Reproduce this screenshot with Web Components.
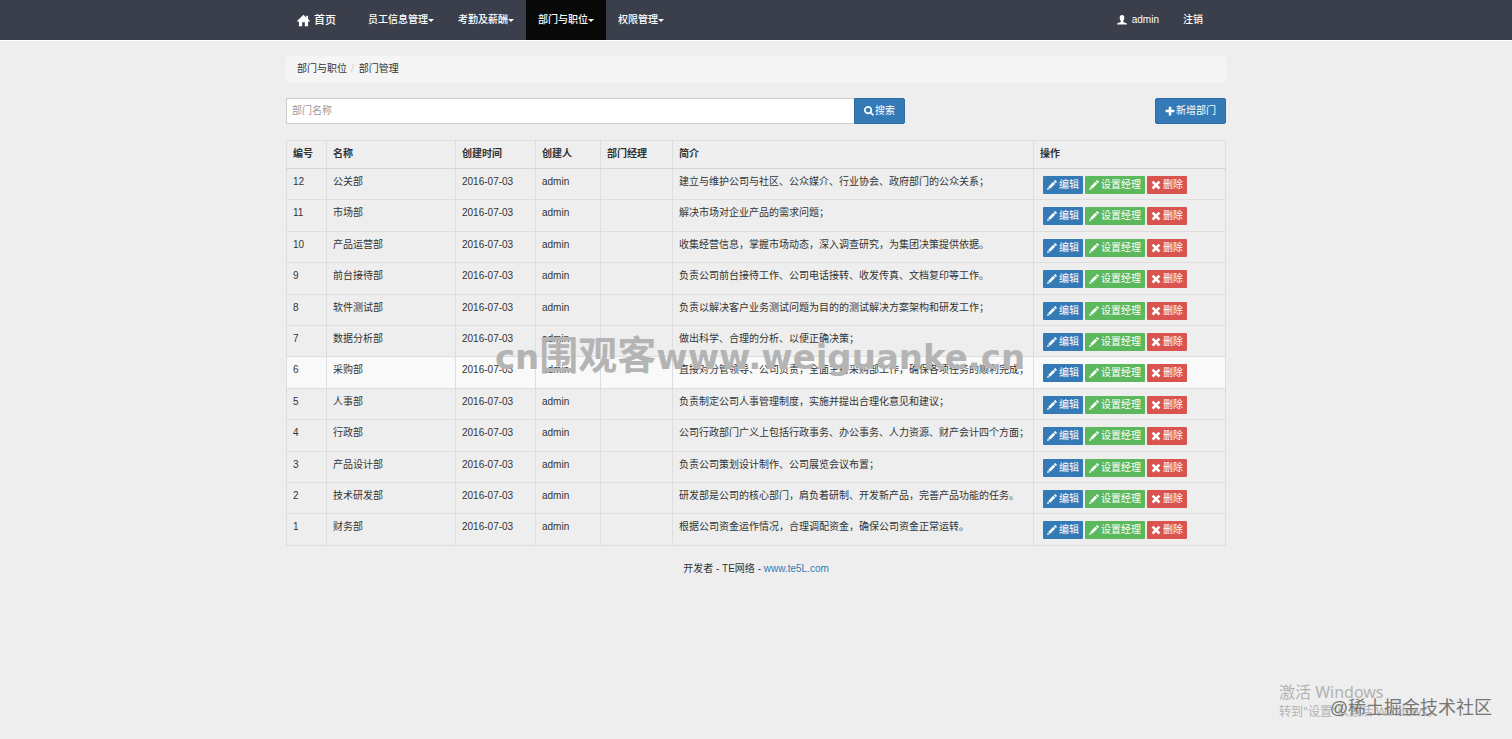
<!DOCTYPE html>
<html lang="zh-CN">
<head>
<meta charset="utf-8">
<title>部门管理</title>
<style>
  body {
    margin: 0;
    min-height: 100vh;
    position: relative;
    background: #eee;
    color: #333;
    font: 10px/14px "Liberation Sans", "Noto Sans CJK SC", sans-serif;
  }
  main {
    max-width: 940px;
    margin: 16px auto 0;
    display: flex;
    flex-direction: column;
    gap: 16px;
  }
</style>
</head>
<body>
<te-navbar>
  <te-nav-item slot="brand" icon="home" brand>首页</te-nav-item>
  <te-nav-item menu>员工信息管理</te-nav-item>
  <te-nav-item menu>考勤及薪酬</te-nav-item>
  <te-nav-item menu active>部门与职位</te-nav-item>
  <te-nav-item menu>权限管理</te-nav-item>
  <te-nav-item slot="user" icon="user">admin</te-nav-item>
  <te-nav-item slot="user">注销</te-nav-item>
</te-navbar>
<main>
  <te-breadcrumb parent="部门与职位">部门管理</te-breadcrumb>
  <te-toolbar></te-toolbar>
  <te-dept-table></te-dept-table>
  <te-footer>开发者 - TE网络 - </te-footer>
</main>
<te-activation></te-activation>

<script>
const ICONS = {
  home: '<path d="M8 1 0 8.600l1.200 1.200L2.400 8.700V15h4v-5h3.200v5h4V8.700l1.200 1.100L16 8.600l-2.400-2.300V2h-2.200v2.200z"/>',
  user: '<path d="M8 0C5.500 0 4.300 1.700 4.300 4.200c0 2 .7 3.700 1.700 4.700v1.600c0 .6-.4.9-1 1.200C2.500 12.700 0 13 0 15h16c0-2-2.500-2.300-5-3.300-.6-.3-1-.6-1-1.200V8.900c1-1 1.700-2.700 1.700-4.700C11.700 1.700 10.500 0 8 0z"/>',
  search: '<path fill-rule="evenodd" d="M6.500 0a6.500 6.500 0 1 0 3.600 11.900l3.300 3.400c.5.500 1.100.5 1.600 0l.4-.4c.5-.5.5-1.100 0-1.600l-3.400-3.300A6.500 6.500 0 0 0 6.500 0zm0 2.600a3.900 3.900 0 1 1 0 7.800 3.900 3.900 0 0 1 0-7.800z"/>',
  plus: '<path d="M6 1h4v5h5v4h-5v5H6v-5H1V6h5z"/>',
  pencil: '<path d="M12.400.5c.4-.4.900-.4 1.300 0l1.800 1.800c.4.4.4.9 0 1.300L14 5.100 10.900 2zM10 2.900 13.100 6 5 14.100 1.900 11zM1.300 11.800l2.900 2.900L0 16z"/>',
  remove: '<path d="M4 1 8 5l4-4 3 3-4 4 4 4-3 3-4-4-4 4-3-3 4-4-4-4z"/>'
};

function mount(host, html) {
  const tpl = document.createElement('template');
  tpl.innerHTML = html;
  host.attachShadow({ mode: 'open' }).append(tpl.content.cloneNode(true));
}

class TeIcon extends HTMLElement {
  constructor() {
    super();
    mount(this, `
      <style>
        :host { display: inline-block; flex: none; width: 10px; height: 10px; }
        svg { display: block; width: 100%; height: 100%; fill: currentColor; }
      </style>
      <svg viewBox="0 0 16 16" aria-hidden="true">${ICONS[this.getAttribute('name')] || ''}</svg>`);
  }
}

class TeNavItem extends HTMLElement {
  constructor() {
    super();
    const icon = this.getAttribute('icon');
    mount(this, `
      <style>
        :host { display: block; }
        a {
          display: flex; align-items: center;
          box-sizing: border-box; height: 40px; padding: 0 12px;
          color: #fff; text-decoration: none; font-weight: 500;
        }
        te-icon { margin-right: 5px; }
        :host([active]) a { background: #080808; }
        :host([brand]) a { font-size: 11px; padding-right: 20px; }
        :host([brand]) te-icon { width: 13px; height: 13px; margin-right: 4px; }
        .caret { border: 3px solid transparent; border-top-color: currentColor; border-bottom: 0; }
      </style>
      <a href="#">${icon ? `<te-icon name="${icon}"></te-icon>` : ''}<slot></slot>${this.hasAttribute('menu') ? '<span class="caret"></span>' : ''}</a>`);
  }
}

class TeNavbar extends HTMLElement {
  constructor() {
    super();
    mount(this, `
      <style>
        :host { display: block; background: #3a3f4b; box-shadow: 0 1px #fff; }
        nav { display: flex; max-width: 942px; margin: 0 auto; }
        .user { display: flex; margin-left: auto; padding-right: 12px; }
      </style>
      <nav><slot name="brand"></slot><slot></slot><div class="user"><slot name="user"></slot></div></nav>`);
  }
}

class TeBreadcrumb extends HTMLElement {
  constructor() {
    super();
    mount(this, `
      <style>
        :host { display: block; background: #f5f5f5; border-radius: 3px; padding: 6px 11px; }
        ol { display: flex; gap: 4px; margin: 0; padding: 0; list-style: none; }
        .sep { color: #ccc; padding-right: 1px; }
      </style>
      <ol><li>${this.getAttribute('parent')}</li><li class="sep" aria-hidden="true">/</li><li><slot></slot></li></ol>`);
  }
}

class TeToolbar extends HTMLElement {
  constructor() {
    super();
    mount(this, `
      <style>
        :host { display: flex; justify-content: space-between; }
        form { display: flex; flex: 0 1 619px; }
        input {
          flex: 1; min-width: 0; box-sizing: border-box; height: 26px; padding: 0 5px 1px;
          font: inherit; color: #555; background: #fff;
          border: 1px solid #ccc; border-right: 0; border-radius: 2px 0 0 2px;
        }
        input::placeholder { color: #999; }
        button {
          display: flex; align-items: center; gap: 1px;
          height: 26px; padding: 0 9px;
          font: inherit; color: #fff; background: #337ab7;
          border: 1px solid #2e6da4; border-radius: 2px;
        }
        form button { border-radius: 0 2px 2px 0; }
      </style>
      <form>
        <input type="text" aria-label="部门名称" placeholder="部门名称">
        <button type="button"><te-icon name="search"></te-icon>搜索</button>
      </form>
      <button type="button"><te-icon name="plus"></te-icon>新增部门</button>`);
  }
}

class TeAction extends HTMLElement {
  constructor() {
    super();
    mount(this, `
      <style>
        :host { display: block; }
        button {
          display: flex; align-items: center; gap: 2px;
          box-sizing: border-box; height: 18px; padding: 0 4px;
          font: inherit; color: #fff; background: #337ab7; border: 0; border-radius: 1px;
        }
        :host([kind="success"]) button { background: #5cb85c; }
        :host([kind="danger"]) button { background: #d9534f; }
      </style>
      <button type="button"><te-icon name="${this.getAttribute('icon')}"></te-icon><slot></slot></button>`);
  }
}

const DEPARTMENTS = [
  [12, '公关部', '建立与维护公司与社区、公众媒介、行业协会、政府部门的公众关系；'],
  [11, '市场部', '解决市场对企业产品的需求问题；'],
  [10, '产品运营部', '收集经营信息，掌握市场动态，深入调查研究，为集团决策提供依据。'],
  [9, '前台接待部', '负责公司前台接待工作、公司电话接转、收发传真、文档复印等工作。'],
  [8, '软件测试部', '负责以解决客户业务测试问题为目的的测试解决方案架构和研发工作；'],
  [7, '数据分析部', '做出科学、合理的分析、以便正确决策；'],
  [6, '采购部', '直接对分管领导、公司负责，全面主持采购部工作，确保各项任务的顺利完成；'],
  [5, '人事部', '负责制定公司人事管理制度，实施并提出合理化意见和建议；'],
  [4, '行政部', '公司行政部门广义上包括行政事务、办公事务、人力资源、财产会计四个方面；'],
  [3, '产品设计部', '负责公司策划设计制作、公司展览会议布置；'],
  [2, '技术研发部', '研发部是公司的核心部门，肩负着研制、开发新产品，完善产品功能的任务。'],
  [1, '财务部', '根据公司资金运作情况，合理调配资金，确保公司资金正常运转。']
];

class TeDeptTable extends HTMLElement {
  constructor() {
    super();
    const rows = DEPARTMENTS.map(([id, name, intro]) => `
      <tr${id === 6 ? ' class="current"' : ''}>
        <td>${id}</td><td>${name}</td><td>2016-07-03</td><td>admin</td><td></td><td>${intro}</td>
        <td><div class="actions">
          <te-action icon="pencil">编辑</te-action>
          <te-action icon="pencil" kind="success">设置经理</te-action>
          <te-action icon="remove" kind="danger">删除</te-action>
        </div></td>
      </tr>`).join('');
    mount(this, `
      <style>
        :host { display: block; position: relative; }
        table { width: 100%; height: 406px; table-layout: fixed; border-collapse: collapse; }
        col.id { width: 40px; }
        col.name { width: 129px; }
        col.date { width: 80px; }
        col.by { width: 65px; }
        col.lead { width: 72px; }
        col.act { width: 192px; }
        th, td {
          border: 1px solid #ddd; padding: 6px 0 5px 6px;
          text-align: left; vertical-align: top; white-space: nowrap;
        }
        th { height: 16px; border-bottom-color: #d4d4d4; }
        .actions { display: flex; gap: 2px; padding: 1px 0 0 3px; }
        .current { background: #f9f9f9; }
        te-watermark { position: absolute; top: 192px; left: 0; right: 0; }
      </style>
      <table>
        <colgroup><col class="id"><col class="name"><col class="date"><col class="by"><col class="lead"><col><col class="act"></colgroup>
        <thead><tr><th>编号</th><th>名称</th><th>创建时间</th><th>创建人</th><th>部门经理</th><th>简介</th><th>操作</th></tr></thead>
        <tbody>${rows}</tbody>
      </table>
      <te-watermark></te-watermark>`);
  }
}

class TeWatermark extends HTMLElement {
  constructor() {
    super();
    mount(this, `
      <style>
        :host {
          display: flex; justify-content: center; align-items: baseline; padding-left: 8px;
          font: bold 34px/48px "DejaVu Sans", "Noto Sans CJK SC", sans-serif;
          color: #b4b4b4; pointer-events: none;
        }
        .cjk { font-size: 39px; }
      </style>
      <span>cn</span><span class="cjk">围观客</span><span>www.weiguanke.cn</span>`);
  }
}

class TeFooter extends HTMLElement {
  constructor() {
    super();
    mount(this, `
      <style>
        :host { display: block; text-align: center; }
        a { color: #337ab7; text-decoration: none; }
      </style>
      <slot></slot><a href="#">www.te5L.com</a>`);
  }
}

class TeActivation extends HTMLElement {
  constructor() {
    super();
    mount(this, `
      <style>
        :host {
          position: absolute; right: 20px; bottom: 18px; width: 213px;
          display: block; white-space: nowrap; pointer-events: none;
          color: #b2b2b2; font-family: "Noto Sans", "Noto Sans CJK SC", sans-serif;
        }
        p { margin: 0; }
        .title { font-size: 16px; line-height: 22px; }
        .hint { font-size: 12px; line-height: 18px; }
        .community {
          position: absolute; right: 0; bottom: 1px; color: #777;
          font: 18px/24px "Liberation Sans", "Noto Sans CJK SC", sans-serif;
        }
      </style>
      <p class="title">激活 Windows</p>
      <p class="hint">转到"设置"以激活 Windows。</p>
      <p class="community">@稀土掘金技术社区</p>`);
  }
}

customElements.define('te-icon', TeIcon);
customElements.define('te-nav-item', TeNavItem);
customElements.define('te-navbar', TeNavbar);
customElements.define('te-breadcrumb', TeBreadcrumb);
customElements.define('te-toolbar', TeToolbar);
customElements.define('te-action', TeAction);
customElements.define('te-watermark', TeWatermark);
customElements.define('te-dept-table', TeDeptTable);
customElements.define('te-footer', TeFooter);
customElements.define('te-activation', TeActivation);
</script>
</body>
</html>
